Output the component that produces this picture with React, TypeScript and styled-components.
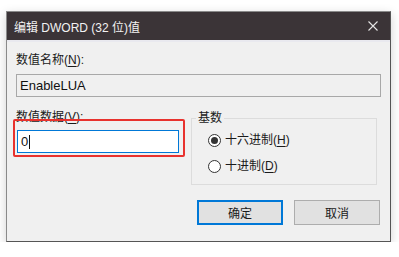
import React from 'react';
import styled, { createGlobalStyle } from 'styled-components';

const GlobalStyle = createGlobalStyle`
  html, body {
    margin: 0;
    padding: 0;
    background: #ffffff;
  }
  body {
    font-family: "Liberation Sans", "Noto Sans CJK SC", sans-serif;
    font-size: 12px;
  }
`;

function Dialog() {
  return (
    <Page>
      <Window>
        <TitleBar>
          <Title>编辑 DWORD (32 位)值</Title>
          <CloseIcon viewBox="0 0 10 10">
            <path d="M0.5 0.5 L9.5 9.5 M9.5 0.5 L0.5 9.5" stroke="#e6e6e6" strokeWidth="1.1" />
          </CloseIcon>
        </TitleBar>
        <Body>
          <Label>数值名称(<u>N</u>):</Label>
          <NameInput>EnableLUA</NameInput>
          <Row>
            <DataColumn>
              <Label>数值数据(<u>V</u>):</Label>
              <DataInput>
                0<Caret />
              </DataInput>
              {/* 标注的红框 */}
              <Highlight />
            </DataColumn>
            <Group>
              <Legend>基数</Legend>
              <Radio checked>十六进制(<u>H</u>)</Radio>
              <Radio>十进制(<u>D</u>)</Radio>
            </Group>
          </Row>
          <Buttons>
            <Button primary>确定</Button>
            <Button>取消</Button>
          </Buttons>
        </Body>
      </Window>
    </Page>
  );
}

function Radio({ checked, children }: { checked?: boolean; children: React.ReactNode }) {
  return (
    <RadioRow>
      <RadioCircle>{checked && <RadioDot />}</RadioCircle>
      <span>{children}</span>
    </RadioRow>
  );
}

const Page = styled.div`
  padding: 11px 0 0 6px;
`;

const Window = styled.div`
  width: 383px;
  height: 229px;
  border: 1px solid #8a8a8a;
  border-right-color: #555;
  border-bottom-color: #555;
  background: #f0f0f0;
  box-shadow: 0 3px 10px rgba(0, 0, 0, 0.18);
  display: flex;
  flex-direction: column;
`;

const TitleBar = styled.div`
  height: 28px;
  background: #3b3437;
  color: #f2f2f2;
  display: flex;
  align-items: center;
  justify-content: space-between;
  padding: 0 12px 0 7px;
  border-bottom: 2px solid #e9e9ef;
`;

const Title = styled.span`
  font-size: 12px;
  font-family: "Liberation Sans", "Noto Sans CJK SC", sans-serif;
  padding-top: 1px;
`;

const CloseIcon = styled.svg`
  width: 10px;
  height: 10px;
`;

const Body = styled.div`
  padding: 10px 9px 0 9px;
  display: flex;
  flex-direction: column;
`;

const Label = styled.div`
  font-size: 12px;
  line-height: 16px;
  color: #1a1a1a;
  font-family: "Liberation Sans", "Noto Sans CJK SC", sans-serif;
  u {
    text-decoration-thickness: 1px;
    text-underline-offset: 2px;
  }
`;

const NameInput = styled.div`
  margin-top: 6px;
  height: 21px;
  border: 1px solid #a8a8a8;
  background: #f0f0f0;
  font-family: "Liberation Sans", "Noto Sans", sans-serif;
  font-size: 13px;
  line-height: 21px;
  padding-left: 3px;
  color: #111;
`;

const Row = styled.div`
  margin-top: 12px;
  display: flex;
  gap: 12px;
`;

const DataColumn = styled.div`
  position: relative;
  width: 163px;
`;

const DataInput = styled.div`
  margin-top: 5px;
  margin-left: 1px;
  height: 21px;
  border: 1px solid #0078d7;
  background: #ffffff;
  font-family: "Liberation Sans", "Noto Sans", sans-serif;
  font-size: 13px;
  line-height: 21px;
  padding-left: 3px;
  color: #111;
  display: flex;
  align-items: center;
`;

const Caret = styled.span`
  display: inline-block;
  width: 1px;
  height: 14px;
  background: #111;
  margin-left: 1px;
`;

const Highlight = styled.div`
  position: absolute;
  left: -3px;
  top: 10px;
  width: 168px;
  height: 34px;
  border: 2px solid #e8322e;
  border-radius: 2px;
`;

const Group = styled.fieldset`
  margin: 1px 0 0 0;
  width: 186px;
  height: 75px;
  box-sizing: border-box;
  border: 1px solid #dcdcdc;
  padding: 0 0 0 16px;
  display: flex;
  flex-direction: column;
  gap: 10px;
`;

const Legend = styled.legend`
  padding: 0 2px;
  margin-left: -12px;
  font-size: 12px;
  line-height: 16px;
  color: #1a1a1a;
  font-family: "Liberation Sans", "Noto Sans CJK SC", sans-serif;
`;

const RadioRow = styled.div`
  display: flex;
  align-items: center;
  gap: 4px;
  font-size: 12px;
  line-height: 16px;
  color: #1a1a1a;
  font-family: "Liberation Sans", "Noto Sans CJK SC", sans-serif;
  &:first-of-type {
    margin-top: 6px;
  }
  u {
    text-underline-offset: 2px;
  }
`;

const RadioCircle = styled.span`
  width: 11px;
  height: 11px;
  border: 1px solid #333;
  border-radius: 50%;
  background: #fff;
  display: flex;
  align-items: center;
  justify-content: center;
`;

const RadioDot = styled.span`
  width: 7px;
  height: 7px;
  border-radius: 50%;
  background: #333;
`;

const Buttons = styled.div`
  margin-top: 15px;
  display: flex;
  justify-content: flex-end;
  gap: 11px;
  padding-right: 1px;
`;

const Button = styled.div<{ primary?: boolean }>`
  width: 84px;
  height: 23px;
  box-sizing: content-box;
  border: 1px solid ${p => (p.primary ? '#0078d7' : '#adadad')};
  box-shadow: ${p => (p.primary ? 'inset 0 0 0 1px #0078d7' : 'none')};
  background: #e1e1e1;
  display: flex;
  align-items: center;
  justify-content: center;
  font-size: 12px;
  color: #1a1a1a;
  font-family: "Liberation Sans", "Noto Sans CJK SC", sans-serif;
`;

export default function App() {
  return (
    <>
      <GlobalStyle />
      <Dialog />
    </>
  );
}
